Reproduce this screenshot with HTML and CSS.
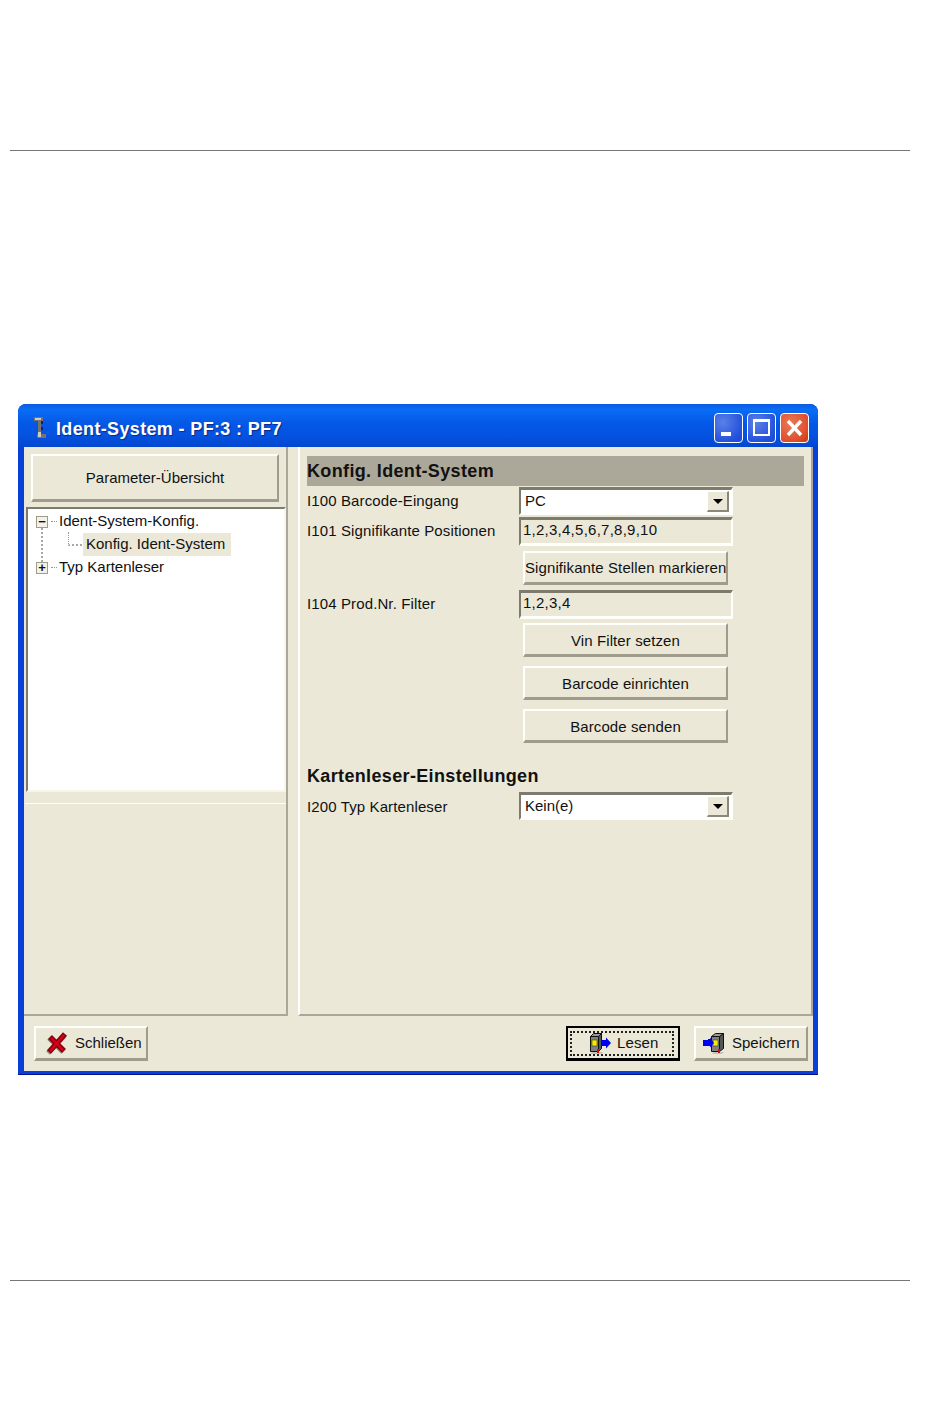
FILE: index.html
```html
<!DOCTYPE html>
<html lang="de">
<head>
    <meta charset="UTF-8">
    <meta name="viewport" content="width=device-width, initial-scale=1.0">
    <title>Ident-System - PF:3 : PF7</title>
    <link rel="stylesheet" href="styles.css">
</head>
<body>

    <div class="page-head"></div>
    <hr class="page-rule">

    <div class="window">
        <div class="titlebar">
            <svg class="title-icon" width="14" height="24" viewBox="0 0 14 24">
                <path d="M1 0h9v4H8v13h5v4H4v-4h1V4H1z" fill="#77736a"/>
                <path d="M2 1h6v2H2zM5 15h3v5H5z" fill="#cfcbbe"/>
                <path d="M8 4h2v3H8zM8 10h2v3H8z" fill="#10207a"/>
            </svg>
            <span class="title-text">Ident-System - PF:3 : PF7</span>
            <div class="title-buttons">
                <div class="title-btn">
                    <svg width="29" height="30" viewBox="0 0 29 30"><rect x="7" y="19" width="10" height="4" fill="#fff"/></svg>
                </div>
                <div class="title-btn">
                    <svg width="29" height="30" viewBox="0 0 29 30"><path d="M7 7h15v15H7z" fill="none" stroke="#fff" stroke-width="2"/><rect x="7" y="6" width="15" height="3" fill="#fff"/></svg>
                </div>
                <div class="title-btn close">
                    <svg width="29" height="30" viewBox="0 0 29 30"><path d="M8 8l13 14M21 8L8 22" stroke="#fff" stroke-width="3.4"/></svg>
                </div>
            </div>
        </div>

        <div class="client">
            <div class="main">
                <div class="left-panel">
                    <button class="btn overview-btn">Parameter-Übersicht</button>
                    <div class="tree">
                        <div class="tree-row root open">
                            <span class="expander">&minus;</span><span class="dash"></span>
                            <span class="tree-label">Ident-System-Konfig.</span>
                        </div>
                        <div class="tree-row child">
                            <span class="elbow"></span>
                            <span class="tree-label selected">Konfig. Ident-System</span>
                        </div>
                        <div class="tree-row root">
                            <span class="expander">+</span><span class="dash"></span>
                            <span class="tree-label">Typ Kartenleser</span>
                        </div>
                    </div>
                    <div class="tree-strip"></div>
                </div>

                <div class="right-panel">
                    <h2 class="section-bar">Konfig. Ident-System</h2>

                    <div class="form-row first">
                        <label>I100 Barcode-Eingang</label>
                        <div class="combo"><span>PC</span><span class="combo-arrow"></span></div>
                    </div>
                    <div class="form-row second">
                        <label>I101 Signifikante Positionen</label>
                        <div class="field">1,2,3,4,5,6,7,8,9,10</div>
                    </div>
                    <button class="btn form-btn tight">Signifikante Stellen markieren</button>
                    <div class="form-row third">
                        <label>I104 Prod.Nr. Filter</label>
                        <div class="field">1,2,3,4</div>
                    </div>
                    <button class="btn form-btn">Vin Filter setzen</button>
                    <button class="btn form-btn">Barcode einrichten</button>
                    <button class="btn form-btn">Barcode senden</button>

                    <h2 class="section-title">Kartenleser-Einstellungen</h2>
                    <div class="form-row last">
                        <label>I200 Typ Kartenleser</label>
                        <div class="combo"><span>Kein(e)</span><span class="combo-arrow"></span></div>
                    </div>
                </div>
            </div>

            <div class="footer">
                <button class="btn foot-btn close-btn">
                    <svg width="24" height="24" viewBox="0 0 24 24">
                        <path d="M5 21L21 4M6 6l14 14" stroke="#8a8a80" stroke-width="5" transform="translate(-1 1)"/>
                        <path d="M5 21L21 3M6 6l14 14" stroke="#8c0010" stroke-width="5.500"/>
                        <path d="M6 20L20 4M7 7l12 12" stroke="#d80018" stroke-width="2"/>
                    </svg>
                    Schließen
                </button>
                <div class="footer-gap"></div>
                <button class="btn foot-btn focused">
                    <span class="focus-ring">
                        <svg width="22" height="22" viewBox="0 0 22 22">
                            <path d="M1 22h11l2-2H3z" fill="#c4c2b8"/>
                            <path d="M1.500 4.500h8v15h-8z" fill="#808080" stroke="#111"/>
                            <path d="M9.500 4.500l3-3v15l-3 3z" fill="#555" stroke="#111"/>
                            <path d="M1.500 4.500l3-3h8l-3 3z" fill="#999" stroke="#111"/>
                            <rect x="3" y="8" width="5" height="6" fill="#f4ec00" stroke="#222" stroke-width=".5"/>
                            <path d="M8 17h2v4H8z" fill="#c81010"/>
                            <path d="M12 8h5V5.500l5 5.500-5 5.500V14h-5z" fill="#0000f0"/>
                        </svg>
                        Lesen
                    </span>
                </button>
                <button class="btn foot-btn save">
                    <svg width="22" height="22" viewBox="0 0 22 22">
                        <path d="M9 22h10l2-2H11z" fill="#c4c2b8"/>
                        <path d="M8.500 4.500h8v15h-8z" fill="#808080" stroke="#111"/>
                        <path d="M16.500 4.500l4-3v15l-4 3z" fill="#555" stroke="#111"/>
                        <path d="M8.500 4.500l4-3h8l-4 3z" fill="#999" stroke="#111"/>
                        <rect x="10" y="8" width="5" height="6" fill="#f4ec00" stroke="#222" stroke-width=".5"/>
                        <path d="M15 17h2v4h-2z" fill="#c81010"/>
                        <path d="M0 8h5V7h2V5.500l4 5.500-4 4.500V14H0z" fill="#0000f0"/>
                    </svg>
                    Speichern
                </button>
            </div>
        </div>
    </div>

    <hr class="page-rule bottom">

</body>
</html>
```

FILE: styles.css
```css
body {
    margin: 0;
    background: white;
    font-family: "Liberation Sans", Arial, sans-serif;
    font-size: 15px;
    color: #111;
}

.page-head {
    height: 150px;
}

.page-rule {
    width: 900px;
    height: 1px;
    margin: 0 0 0 10px;
    border: none;
    background: #777;
}

.page-rule.bottom {
    margin-top: 205px;
}

/* Window frame */
.window {
    box-sizing: border-box;
    width: 800px;
    height: 671px;
    margin: 253px 0 0 18px;
    padding: 0 5px 4px 6px;
    border-radius: 8px 8px 0 0;
    background: #0a3fd8;
    border-bottom: 1px solid #00138c;
    overflow: hidden;
}

.titlebar {
    box-sizing: border-box;
    display: flex;
    align-items: center;
    height: 43px;
    margin: 0 -5px 0 -6px;
    padding: 7px 9px 0 15px;
    background: linear-gradient(#0a5be0 0, #0a6cf4 12%, #0458e6 45%, #0452e0 75%, #0346d0 100%);
}

.title-icon {
    margin-right: 9px;
}

.title-text {
    color: white;
    font-weight: bold;
    font-size: 18px;
    letter-spacing: 0.35px;
    text-shadow: 1px 1px 1px #0a2a90;
}

.title-buttons {
    display: flex;
    gap: 4px;
    margin-left: auto;
    margin-top: -2px;
}

.title-btn {
    box-sizing: border-box;
    width: 29px;
    height: 30px;
    border: 1px solid white;
    border-radius: 4px;
    background: radial-gradient(circle at 30% 30%, #5b80e8, #2452dc 70%, #1a48d8);
}

.title-btn svg {
    display: block;
    margin: -1px;
}

.title-btn.close {
    background: radial-gradient(circle at 35% 35%, #ea7a58, #e05030 65%, #c43810);
}

/* Client area */
.client {
    display: flex;
    flex-direction: column;
    height: 624px;
    background: #ebe8d8;
}

.main {
    display: flex;
    justify-content: space-between;
    height: 569px;
}

.btn {
    box-sizing: border-box;
    padding: 2px 0 0;
    border: none;
    border-top: 2px solid #fffffb;
    border-left: 2px solid #fffffb;
    border-right: 2px solid #a09c8c;
    border-bottom: 3px solid #a09c8c;
    background: #ebe8d8;
    color: #111;
    font-family: inherit;
    font-size: 15px;
    white-space: nowrap;
}

/* Left side */
.left-panel {
    box-sizing: border-box;
    width: 264px;
    padding: 7px 0 0 2px;
    border-right: 2px solid #aca899;
    border-bottom: 2px solid #aca899;
}

.overview-btn {
    display: block;
    width: 248px;
    height: 48px;
    margin: 0 0 5px 5px;
    padding-top: 0;
}

.tree {
    box-sizing: border-box;
    height: 285px;
    padding-top: 1px;
    border-top: 2px solid #7d7a6e;
    border-left: 2px solid #7d7a6e;
    border-bottom: 2px solid #f8f6ec;
    border-right: 2px solid #f8f6ec;
    background: white;
}

.tree-strip {
    height: 11px;
    margin-left: -1px;
    border-bottom: 1px solid white;
}

.tree-row {
    position: relative;
    display: flex;
    align-items: center;
    height: 23px;
}

.tree-row.root {
    padding-left: 8px;
}

.tree-row.open::after {
    content: "";
    position: absolute;
    left: 13px;
    top: 18px;
    height: 34px;
    border-left: 2px dotted #a8a8a0;
}

.expander {
    box-sizing: border-box;
    display: flex;
    align-items: center;
    justify-content: center;
    width: 12px;
    height: 12px;
    border: 1px solid #a09c8c;
    background: #f4f2e8;
    font-size: 13px;
    font-weight: bold;
    line-height: 1;
}

.dash {
    width: 6px;
    margin: 0 2px 0 3px;
    border-top: 1px dotted #999;
}

.tree-row.child {
    padding-left: 40px;
}

.elbow {
    width: 13px;
    height: 12px;
    margin-top: -12px;
    margin-right: 1px;
    border-left: 1px dotted #999;
    border-bottom: 2px dotted #aaa;
}

.tree-label {
    padding-bottom: 2px;
}

.tree-label.selected {
    padding: 0 6px 2px 3px;
    line-height: 21px;
    background: #ebe8d8;
}

/* Right side */
.right-panel {
    box-sizing: border-box;
    width: 515px;
    padding: 9px 0 0 7px;
    border-left: 2px solid white;
    border-right: 2px solid #aca899;
    border-bottom: 2px solid #aca899;
}

.section-bar,
.section-title {
    margin: 0;
    font-size: 18px;
    font-weight: bold;
    letter-spacing: 0.35px;
}

.section-bar {
    width: 497px;
    height: 30px;
    line-height: 30px;
    background: #aca899;
}

.section-title {
    height: 24px;
    line-height: 24px;
    margin-top: 21px;
    margin-bottom: 4px;
}

.form-row {
    display: flex;
    align-items: center;
}

.form-row label {
    width: 212px;
    padding-bottom: 2px;
    letter-spacing: 0.12px;
}

.form-row.first {
    margin-top: 1px;
}

.form-row.second {
    margin-top: 2px;
}

.form-row.third {
    margin-top: 5px;
}

.form-row.last label {
    padding-bottom: 0;
}

.combo,
.field {
    box-sizing: border-box;
    width: 214px;
    border-top: 3px solid #7d7a6e;
    border-left: 2px solid #7d7a6e;
    border-right: 2px solid #fffffb;
    border-bottom: 2px solid #fffffb;
}

.combo {
    display: flex;
    align-items: center;
    justify-content: space-between;
    height: 28px;
    padding-left: 4px;
    background: white;
}

.combo span:first-child {
    padding-bottom: 2px;
}

.field {
    height: 29px;
    line-height: 19px;
    padding-left: 2px;
    border-bottom-width: 3px;
    letter-spacing: 0.25px;
}

.combo-arrow {
    box-sizing: border-box;
    display: flex;
    align-items: center;
    justify-content: center;
    width: 22px;
    height: 21px;
    margin-right: 2px;
    border-top: 1px solid #fffffb;
    border-left: 1px solid #fffffb;
    border-right: 2px solid #8c8878;
    border-bottom: 2px solid #8c8878;
    background: #ebe8d8;
}

.combo-arrow::after {
    content: "";
    border-top: 5px solid #000;
    border-left: 5px solid transparent;
    border-right: 5px solid transparent;
}

.form-btn {
    display: block;
    width: 205px;
    height: 34px;
    margin: 9px 0 0 216px;
    letter-spacing: 0.1px;
}

.form-btn.tight {
    margin-top: 5px;
    padding-top: 0;
}

.form-row.third + .form-btn {
    margin-top: 4px;
}

/* Bottom buttons */
.footer {
    display: flex;
    align-items: flex-start;
    padding: 10px 5px 0 10px;
}

.footer-gap {
    flex: 1;
}

.foot-btn {
    display: flex;
    align-items: center;
    gap: 7px;
    width: 114px;
    height: 35px;
    padding: 0 0 1px 8px;
}

.foot-btn svg {
    flex: none;
}

.foot-btn.save {
    margin-left: 14px;
    padding-left: 7px;
}

.foot-btn.focused {
    padding: 0 0 0 2px;
    border: 2px solid #000;
    border-bottom-width: 3px;
}

.focus-ring {
    box-sizing: border-box;
    display: flex;
    align-items: center;
    gap: 6px;
    width: 104px;
    height: 25px;
    padding: 0 0 1px 17px;
    border: 2px dotted #222;
    letter-spacing: 0.1px;
}
```
